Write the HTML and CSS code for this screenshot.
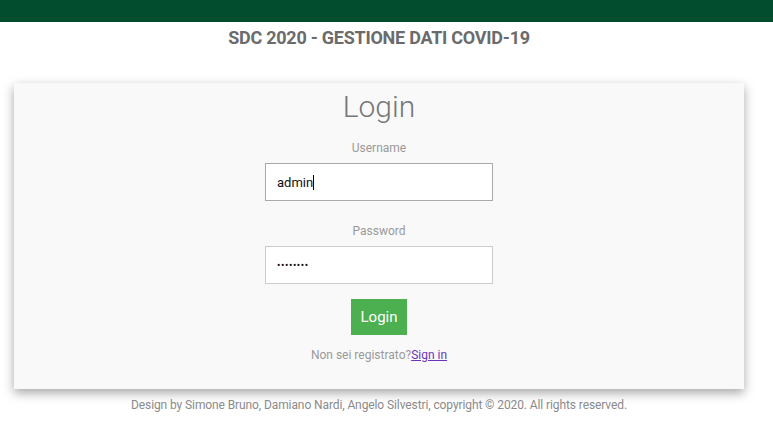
FILE: index.html
```html
<!DOCTYPE html>
<html lang="it">
<head>
<meta charset="utf-8">
<title>Login</title>
<link rel="stylesheet" href="styles.css">
</head>
<body>
<div class="topbar"></div>
<div class="wrap">
  <h1 class="site-title">SDC 2020 - GESTIONE DATI COVID-19</h1>
  <div class="card">
    <h2 class="card-title">Login</h2>
    <form class="form">
      <label class="label" for="u">Username</label>
      <div class="field focused"><span class="value">admin</span><span class="caret"></span></div>
      <label class="label pw" for="p">Password</label>
      <div class="field"><span class="dots">••••••••</span></div>
      <button type="button" class="btn">Login</button>
      <p class="register">Non sei registrato?<a href="#" class="link">Sign in</a></p>
    </form>
  </div>
  <p class="footer">Design by Simone Bruno, Damiano Nardi, Angelo Silvestri, copyright © 2020. All rights reserved.</p>
</div>
</body>
</html>
```
FILE: styles.css
```css
html, body {
  margin: 0;
  padding: 0;
  background: #ffffff;
  font-family: Roboto, "Liberation Sans", sans-serif;
}
.topbar {
  height: 22px;
  background: #034d2f;
}
.wrap {
  margin: 0 29px 0 14px;
}
.site-title {
  margin: 0;
  padding-top: 6px;
  height: 61px;
  box-sizing: border-box;
  text-align: center;
  font-size: 18px;
  font-weight: 700;
  color: #6b6b6b;
  letter-spacing: -0.25px;
  line-height: 20px;
}
.card {
  background: #f9f9f9;
  box-shadow: 0 4px 10px rgba(0,0,0,0.35);
  height: 306px;
  box-sizing: border-box;
  padding-top: 6px;
}
.card-title {
  margin: 0;
  text-align: center;
  font-size: 30px;
  font-weight: 300;
  color: #777777;
  line-height: 36px;
}
.form {
  display: flex;
  flex-direction: column;
  align-items: center;
}
.label {
  font-size: 12px;
  color: #999999;
  line-height: 14px;
  margin-top: 16px;
  margin-bottom: 8px;
}
.label.pw {
  margin-top: 23px;
}
.field {
  width: 228px;
  height: 38px;
  box-sizing: border-box;
  background: #ffffff;
  border: 1px solid #cccccc;
  display: flex;
  align-items: center;
  padding-left: 11px;
  font-size: 13px;
  color: #111;
}
.field.focused {
  border-color: #aaaaaa;
}
.caret {
  width: 1px;
  height: 15px;
  background: #000;
  margin-left: 0;
}
.dots {
  font-size: 10px;
  letter-spacing: 0.6px;
  color: #111;
}
.btn {
  margin-top: 15px;
  width: 56px;
  height: 36px;
  border: none;
  background: #4caf50;
  color: #ffffff;
  font-family: Roboto, sans-serif;
  font-size: 15px;
  padding: 0;
}
.register {
  margin: 13px 0 0;
  font-size: 12px;
  color: #999999;
  line-height: 14px;
}
.link {
  color: #6a35b8;
  text-decoration: underline;
}
.footer {
  margin: 9px 0 0;
  text-align: center;
  font-size: 12px;
  color: #8a8a8a;
  letter-spacing: -0.1px;
  line-height: 14px;
}
```
